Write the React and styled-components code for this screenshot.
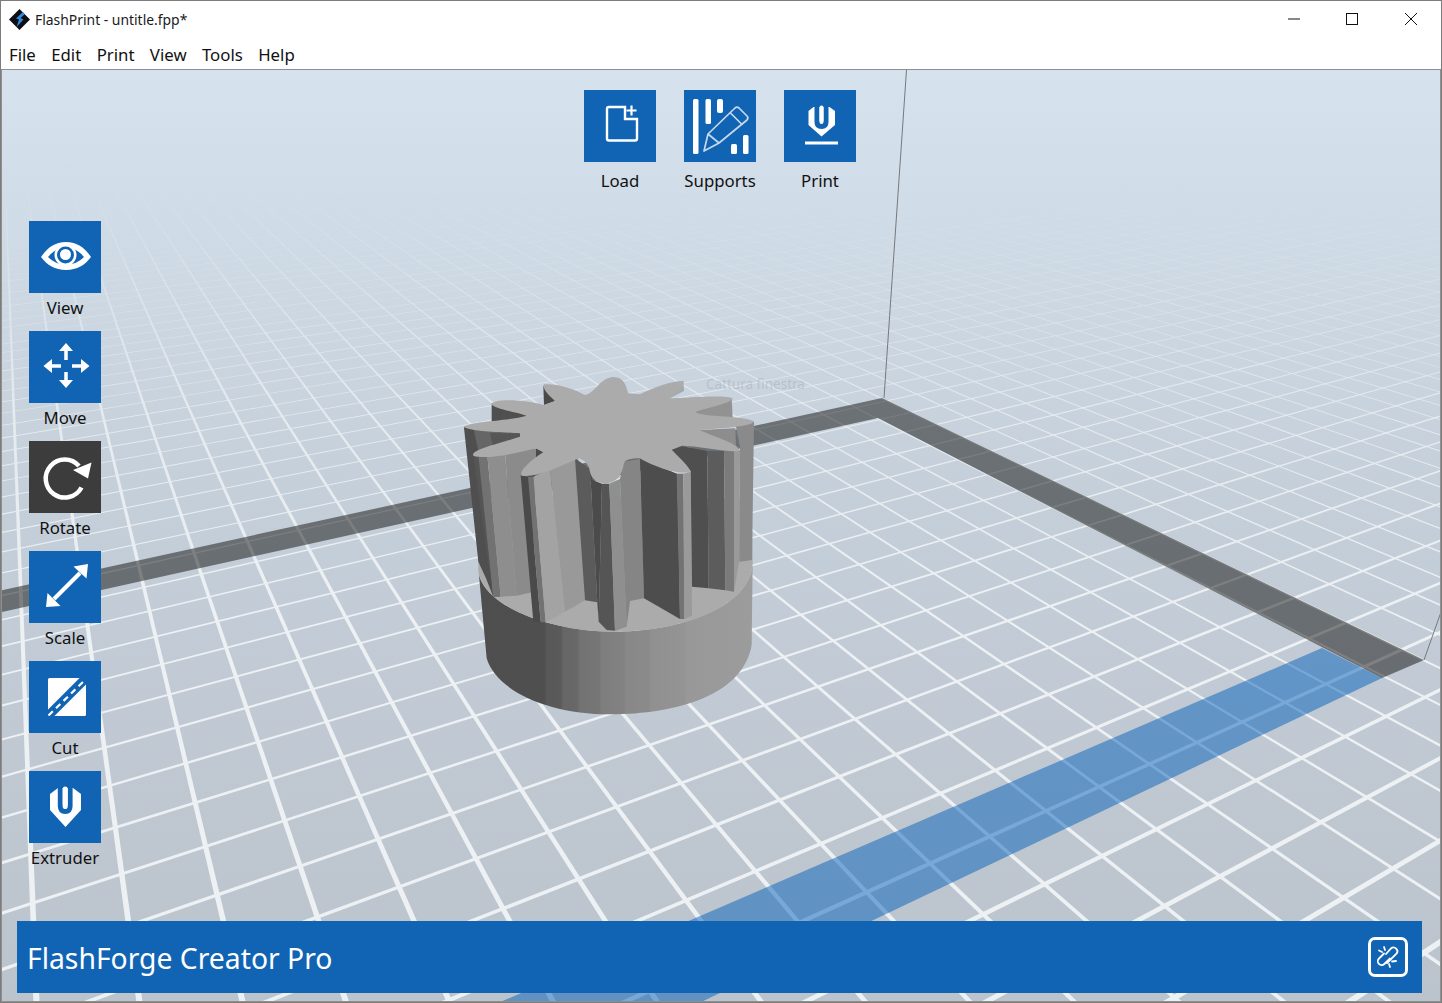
import React from "react";
import styled, { createGlobalStyle } from "styled-components";

const BLUE = "#1164b4";
const UI_FONT = `"Noto Sans", "Open Sans", "Liberation Sans", sans-serif`;

const GlobalStyle = createGlobalStyle`
  html, body { margin: 0; padding: 0; background: #fff; }
  body { font-family: ${UI_FONT}; color: #111; }
`;

const Win = styled.div`
  width: 1442px;
  height: 1003px;
  box-sizing: border-box;
  border: 1px solid #7c7c7c;
  display: flex;
  flex-direction: column;
  overflow: hidden;
  background: #fff;
`;

const TitleBar = styled.div`
  height: 37px;
  display: flex;
  align-items: center;
  padding-left: 8px;
  flex-shrink: 0;
`;

const TitleText = styled.span`
  font-size: 13.9px;
  margin-left: 5px;
  margin-top: -1px;
  color: #1a1a1a;
`;

const WinControls = styled.div`
  margin-left: auto;
  display: flex;
  height: 100%;
  padding-right: 1px;
`;

const WinButton = styled.div`
  width: 58.5px;
  display: flex;
  align-items: center;
  justify-content: center;
  padding-bottom: 1px;
`;

const MenuBar = styled.div`
  height: 31px;
  display: flex;
  align-items: center;
  flex-shrink: 0;
  padding-top: 2px;
  box-sizing: border-box;
`;

const MenuItem = styled.span`
  font-size: 16.8px;
  padding: 0 7.7px;
  color: #111;
  &:first-child { padding-left: 8px; }
`;

const Viewport = styled.div`
  position: relative;
  flex: 1;
  border: 1px solid #8f8f8f;
  overflow: hidden;
`;

const Scene = styled.svg`
  position: absolute;
  left: -2px;
  top: -70px;
  display: block;
`;

const GhostText = styled.span`
  position: absolute;
  left: 704px;
  top: 305px;
  font-size: 13.5px;
  color: rgba(120, 132, 146, 0.25);
`;

const Overlay = styled.div`
  position: relative;
  height: 100%;
  display: flex;
  flex-direction: column;
`;

const TopTools = styled.div`
  display: flex;
  justify-content: center;
  padding: 20px 2px 0 0;
`;

const SideTools = styled.div`
  display: flex;
  flex-direction: column;
  margin: 21px 0 0 27px;
  width: 72px;
`;

const Tool = styled.div`
  width: ${(p) => (p.$wide ? "100px" : "72px")};
  height: 110px;
  display: flex;
  flex-direction: column;
  align-items: center;
`;

const ToolIcon = styled.div`
  width: 72px;
  height: 72px;
  flex-shrink: 0;
  background: ${(p) => (p.$active ? "#3c3c3c" : BLUE)};
  svg { display: block; }
`;

const ToolLabel = styled.span`
  font-size: 16.8px;
  line-height: 24px;
  margin-top: ${(p) => (p.$wide ? "7px" : "3px")};
  white-space: nowrap;
  color: #111;
`;

const StatusBar = styled.div`
  margin: auto 18px 8px 15px;
  height: 72px;
  background: ${BLUE};
  display: flex;
  align-items: center;
  justify-content: space-between;
  padding: 0 14px 0 10px;
`;

const PrinterName = styled.span`
  color: #fff;
  font-size: 28.3px;
  margin-top: 2px;
`;

const LinkButton = styled.div`
  width: 40px;
  height: 40px;
  box-sizing: border-box;
  border: 3px solid #fff;
  border-radius: 7px;
  svg { display: block; }
`;

// ---- icons ----

const Icon = ({ children }) => (
  <svg width="72" height="72" viewBox="0 0 72 72" fill="none" stroke="#fff">
    {children}
  </svg>
);

const LoadIcon = () => (
  <Icon>
    <path d="M41 17H25a2 2 0 0 0-2 2v29.500a2 2 0 0 0 2 2h26a2 2 0 0 0 2-2V29H41V17z" strokeWidth="2.400" />
    <path d="M47.500 15.500v10M42.500 20.500h10" strokeWidth="2.200" />
  </Icon>
);

const SupportsIcon = () => (
  <Icon>
    <g fill="#fff" stroke="none">
      <rect x="9" y="9" width="5.500" height="55" rx="1.500" />
      <rect x="21.500" y="9" width="5.500" height="25" rx="1.500" />
      <rect x="33" y="9" width="6" height="14" rx="2" />
      <rect x="47" y="54" width="6" height="10" rx="1.500" />
      <rect x="59" y="45" width="5.500" height="19" rx="1.500" />
    </g>
    <path
      d="M20 61l4-17 27-26a3 3 0 0 1 4 0l8 8a3 3 0 0 1 0 4L35 53zM24 44l11 9M46.500 23l12 12"
      stroke="#c6d9ec"
      strokeWidth="1.700"
      strokeLinejoin="round"
    />
  </Icon>
);

const PrintIcon = () => (
  <Icon>
    <path d="M24.500 21l5-4h16l5.500 4v14L37.500 46.500 24.500 35z" fill="#fff" stroke="none" />
    <path d="M33 10v22q0 4.500 4.500 4.500T42 32V10" stroke={BLUE} strokeWidth="5" />
    <rect x="35.500" y="15.500" width="4" height="17" rx="2" fill="#fff" stroke="none" />
    <rect x="21" y="51.500" width="33" height="3" fill="#fff" stroke="none" />
  </Icon>
);

const ExtruderIcon = () => (
  <Icon>
    <path d="M21 23l8-6h15l8 6v16L36.500 56 21 39z" fill="#fff" stroke="none" />
    <path d="M31.200 10v25q0 5.500 5 5.500t5-5.500V10" stroke={BLUE} strokeWidth="4.800" />
    <rect x="33.800" y="15.500" width="4.800" height="20" rx="2.400" fill="#fff" stroke="none" />
  </Icon>
);

const ViewIcon = () => (
  <Icon>
    <path d="M12 36C18 27 26 21 37 21s19 6 25 15c-6 8-14 13-25 13s-19-5-25-13z" fill="#fff" stroke="none" />
    <path d="M19 36c5-6 11-9.500 18-9.500s13 3.500 18 9.500c-5 5-11 7.500-18 7.500s-13-2.500-18-7.500z" fill={BLUE} stroke="none" />
    <circle cx="36.500" cy="34" r="11" fill="#fff" stroke="none" />
    <circle cx="36.500" cy="34" r="8.500" fill={BLUE} stroke="none" />
    <circle cx="36.500" cy="33.500" r="5.500" fill="#fff" stroke="none" />
  </Icon>
);

const MoveIcon = () => (
  <Icon>
    <g fill="#fff" stroke="none">
      <path d="M37 12l7 8h-14z" />
      <path d="M37 57l7-8h-14z" />
      <path d="M14.500 35l8.500-7v14z" />
      <path d="M60.500 35l-8.500-7v14z" />
    </g>
    <path d="M37 18v11M37 41v10M22 35h10M43 35h10" strokeWidth="3.500" />
  </Icon>
);

const RotateIcon = () => (
  <Icon>
    <path d="M52.500 46.500A19 19 0 1 1 50 25" strokeWidth="4.500" />
    <path d="M62.500 21.500l-3.500 16-15-8.500z" fill="#fff" stroke="none" />
  </Icon>
);

const ScaleIcon = () => (
  <Icon>
    <path d="M25 48l26-26" strokeWidth="4" />
    <path d="M59 13l-1.500 14.500-13-12zM17 56l1.500-14 13 13z" fill="#fff" stroke="none" />
  </Icon>
);

const CutIcon = () => (
  <Icon>
    <rect x="19" y="17" width="38" height="38" rx="1.500" fill="#fff" stroke="none" />
    <path d="M13 61L63 11" stroke={BLUE} strokeWidth="9" />
    <path d="M19.500 54.500L57 18" strokeWidth="2.200" strokeDasharray="6 4.500" />
  </Icon>
);

const UnlinkIcon = () => (
  <svg width="34" height="34" viewBox="0 0 34 34" fill="none" stroke="#fff" strokeLinecap="round" strokeWidth="1.800">
    <path d="M15 14l5-5.500a3.800 3.800 0 0 1 5.500 5.200L16 23" />
    <path d="M13 13.500l-5 5a3.800 3.800 0 0 0 5.300 5.500l5.700-5.500" />
    <path d="M8 10.500l3 1.500M13 7l1 3M21 21.500l4-.5M18 24l1 3" />
  </svg>
);

const AppLogo = () => (
  <svg width="21" height="21" viewBox="0 0 21 21">
    <path d="M10.500 0L21 10.500 10.500 21 0 10.500z" fill="#0d0d14" />
    <path d="M14 3L7 9.500l3 1-2.500 7.500 7-7.500-3-1.500 4-3.500z" fill="#2f8bdc" />
  </svg>
);

// ---- floor grid, worked out from the two vanishing points of the bed ----

const B = [882, 398];
const VA = [-3, -29];
const VB = [2954, -54];
const a = -542 / 1427;
const b = -880 / 2952;

const project = (u, v) => {
  const w = a * u + b * v + 1;
  return [
    (a * u * VA[0] + b * v * VB[0] + B[0]) / w,
    (a * u * VA[1] + b * v * VB[1] + B[1]) / w,
  ];
};

// pixel back to plane coordinates
const unproject = (x, y) => {
  const A1 = a * (VA[0] - x);
  const B1 = b * (VB[0] - x);
  const C1 = x - B[0];
  const A2 = a * (VA[1] - y);
  const B2 = b * (VB[1] - y);
  const C2 = y - B[1];
  const det = A1 * B2 - A2 * B1;
  return [(C1 * B2 - C2 * B1) / det, (A1 * C2 - A2 * C1) / det];
};

const u0 = unproject(1390, 655)[0];
const uStep = Math.abs(u0 - unproject(1238, 578)[0]) / 3;
const v0 = unproject(31, 860)[1];
const vStep = Math.abs(v0 - unproject(298, 860)[1]) / 3;
const THICK = 0.03;
const FAR = -60;

const quad = (pts) => pts.map((p) => p.map((n) => n.toFixed(1)).join(",")).join(" ");

const gridLines = () => {
  const out = [];
  const hu = uStep * THICK;
  const hv = vStep * THICK;
  for (let k = -70; k < 40; k++) {
    const u = u0 + k * uStep;
    const near = (0.08 - 1 - a * u) / b;
    out.push(quad([project(u - hu, FAR), project(u + hu, FAR), project(u + hu, near), project(u - hu, near)]));
  }
  for (let k = -70; k < 40; k++) {
    const v = v0 + k * vStep;
    const near = (0.08 - 1 - b * v) / a;
    out.push(quad([project(FAR, v - hv), project(FAR, v + hv), project(near, v + hv), project(near, v - hv)]));
  }
  return out;
};

const GRID = gridLines();

// gear, in coordinates of a 3x crop anchored at 450,365
const FACES = [
  ["125,115 232,152 212,205 125,185", "#4f4f4f"],
  ["280,62 316,108 282,120", "#4a4a4a"],
  ["700,50 702,78 655,102 640,70", "#a3a9ab"],
  ["845,100 848,160 740,160 735,140", "#929292"],
  ["42,185 212,205 212,250 90,280 70,270", "#666"],
  ["120,205 212,205 212,240 130,250", "#565656"],
  ["42,188 70,190 90,280 130,696 108,640 85,590", "#4f4f4f"],
  ["68,265 88,270 130,696", "#555"],
  ["85,270 112,270 152,695 130,696", "#727272"],
  ["112,270 165,265 200,692 152,695", "#8e8e8e"],
  ["165,265 258,250 246,682 200,692", "#8b8b8b"],
  ["258,250 282,262 232,330 246,682", "#4b4b4b"],
  ["212,330 234,335 272,772 250,770", "#4a4a4a"],
  ["234,335 250,335 287,772 272,772", "#727272"],
  ["250,335 300,312 345,740 287,772", "#a3a3a3"],
  ["300,312 385,280 405,706 345,740", "#999"],
  ["375,280 420,312 442,712 405,706", "#5b5b5b"],
  ["420,312 428,345 456,356 446,770 442,712", "#4b4b4b"],
  ["456,356 478,356 495,797 470,795 446,770", "#555"],
  ["478,356 510,342 530,785 495,797", "#8f8f8f"],
  ["510,342 522,290 570,282 582,700 540,708 530,785", "#858585"],
  ["570,282 682,326 690,762 582,700", "#4d4d4d"],
  ["680,326 700,326 703,762 690,762", "#737373"],
  ["700,326 722,320 726,752 703,762", "#9a9a9a"],
  ["665,254 695,244 772,258 776,670 726,665 722,318", "#4f4f4f"],
  ["772,258 822,258 826,676 776,670", "#5c5c5c"],
  ["822,258 852,256 852,680 826,676", "#7b7b7b"],
  ["852,256 870,255 868,585 852,680", "#9a9a9a"],
  ["750,195 856,190 858,245 750,205", "#8d8d8d"],
  ["856,175 912,170 906,585 868,590 870,245", "#8a8a8a"],
];

const STAR =
  "M282 58C330 55 375 75 405 90C435 85 450 38 490 36C525 36 530 70 535 85L570 88C610 68 660 48 700 48C706 62 680 88 655 100C720 98 830 88 848 100C850 112 770 130 735 140C755 158 890 150 912 170C900 188 780 190 750 195C775 210 870 235 868 258C830 262 740 242 695 242L665 254C690 280 720 305 720 320C690 330 620 310 570 280C540 280 525 285 522 295C515 330 505 350 470 355C430 355 420 330 418 310C410 290 395 282 385 280C340 300 260 340 215 332C205 318 250 280 280 262L258 250C200 265 110 285 70 272C60 255 150 235 210 215L210 205C150 200 60 200 42 185C70 168 180 168 230 152C190 140 130 130 125 118C130 98 230 105 282 120L315 108C300 95 275 72 282 58Z";

const BASE_STOPS = [
  [0, "#4e4e4e"], [0.24, "#4f4f4f"], [0.25, "#585858"], [0.3, "#5a5a5a"], [0.31, "#666"], [0.36, "#686868"],
  [0.37, "#727272"], [0.44, "#767676"], [0.45, "#7e7e7e"], [0.53, "#828282"], [0.54, "#888"], [0.62, "#8a8a8a"],
  [0.63, "#909090"], [0.75, "#949494"], [0.76, "#989898"], [1, "#9c9c9c"],
];

const FloorScene = () => (
  <Scene width="1442" height="1003" viewBox="0 0 1442 1003">
    <defs>
      <linearGradient id="sky" x1="0" y1="70" x2="0" y2="1003" gradientUnits="userSpaceOnUse">
        <stop offset="0" stopColor="#d6e2ed" />
        <stop offset="0.14" stopColor="#d0dce7" />
        <stop offset="0.45" stopColor="#c5cfd9" />
        <stop offset="1" stopColor="#bbc3cc" />
      </linearGradient>
      <linearGradient id="fog" x1="0" y1="165" x2="0" y2="620" gradientUnits="userSpaceOnUse">
        <stop offset="0" stopColor="#fff" stopOpacity="0" />
        <stop offset="0.2" stopColor="#fff" stopOpacity="0.32" />
        <stop offset="0.55" stopColor="#fff" stopOpacity="0.78" />
        <stop offset="1" stopColor="#fff" stopOpacity="1" />
      </linearGradient>
      <mask id="fogMask" maskUnits="userSpaceOnUse" x="0" y="0" width="1442" height="1003">
        <rect width="1442" height="1003" fill="url(#fog)" />
      </mask>
      <linearGradient id="baseShade" x1="85" y1="0" x2="908" y2="0" gradientUnits="userSpaceOnUse">
        {BASE_STOPS.map(([o, c]) => (
          <stop key={o} offset={o} stopColor={c} />
        ))}
      </linearGradient>
    </defs>
    <rect width="1442" height="1003" fill="url(#sky)" />
    <g mask="url(#fogMask)" fill="#edf1f4">
      {GRID.map((p, i) => (
        <polygon key={i} points={p} />
      ))}
    </g>
    <polygon points="1322,648 1382,678 699,1003 498,1003" fill="rgb(3,96,186)" fillOpacity="0.5" />
    <polygon points="-2,591 882,398 1424,660 1382,678 878,418 -2,613" fill="rgb(15,16,14)" fillOpacity="0.5" />
    <path d="M906.500 70L884 398M1441 612L1424 660" stroke="#77797c" strokeWidth="1" fill="none" />
    <g transform="translate(450 365) scale(0.33333)">
      <path
        d="M85 610L110 880C140 980 300 1048 480 1048C680 1048 880 990 905 840L908 590C908 720 700 800 490 800C300 800 85 720 85 610Z"
        fill="url(#baseShade)"
      />
      <path d="M85 610C85 720 300 800 490 800C700 800 908 720 908 590L905 400H90Z" fill="#ababab" />
      {FACES.map(([pts, c], i) => (
        <polygon key={i} points={pts} fill={c} />
      ))}
      <path d={STAR} fill="#ababab" />
    </g>
  </Scene>
);

const TOP_TOOLS = [
  ["Load", LoadIcon],
  ["Supports", SupportsIcon],
  ["Print", PrintIcon],
];

const SIDE_TOOLS = [
  ["View", ViewIcon],
  ["Move", MoveIcon],
  ["Rotate", RotateIcon, true],
  ["Scale", ScaleIcon],
  ["Cut", CutIcon],
  ["Extruder", ExtruderIcon],
];

const MENU = ["File", "Edit", "Print", "View", "Tools", "Help"];

export default function App() {
  return (
    <>
      <GlobalStyle />
      <Win>
        <TitleBar>
          <AppLogo />
          <TitleText>FlashPrint - untitle.fpp*</TitleText>
          <WinControls>
            <WinButton>
              <svg width="12" height="12" viewBox="0 0 12 12"><path d="M0 6h12" stroke="#111" /></svg>
            </WinButton>
            <WinButton>
              <svg width="12" height="12" viewBox="0 0 12 12"><rect x=".5" y=".5" width="11" height="11" fill="none" stroke="#111" /></svg>
            </WinButton>
            <WinButton>
              <svg width="12" height="12" viewBox="0 0 12 12"><path d="M0 0l12 12M12 0L0 12" stroke="#111" /></svg>
            </WinButton>
          </WinControls>
        </TitleBar>
        <MenuBar>
          {MENU.map((m) => (
            <MenuItem key={m}>{m}</MenuItem>
          ))}
        </MenuBar>
        <Viewport>
          <FloorScene />
          <GhostText>Cattura finestra</GhostText>
          <Overlay>
            <TopTools>
              {TOP_TOOLS.map(([label, Glyph]) => (
                <Tool key={label} $wide>
                  <ToolIcon><Glyph /></ToolIcon>
                  <ToolLabel $wide>{label}</ToolLabel>
                </Tool>
              ))}
            </TopTools>
            <SideTools>
              {SIDE_TOOLS.map(([label, Glyph, active]) => (
                <Tool key={label}>
                  <ToolIcon $active={active}><Glyph /></ToolIcon>
                  <ToolLabel>{label}</ToolLabel>
                </Tool>
              ))}
            </SideTools>
            <StatusBar>
              <PrinterName>FlashForge Creator Pro</PrinterName>
              <LinkButton><UnlinkIcon /></LinkButton>
            </StatusBar>
          </Overlay>
        </Viewport>
      </Win>
    </>
  );
}
